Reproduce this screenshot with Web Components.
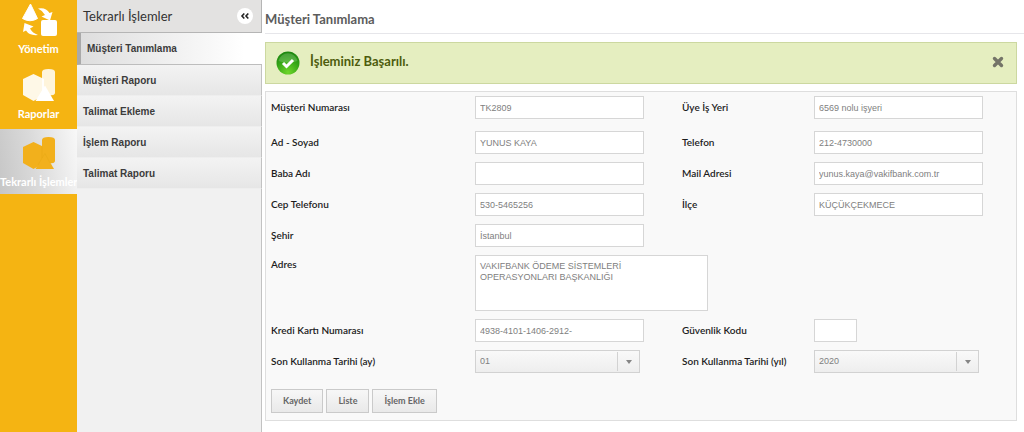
<!DOCTYPE html>
<html lang="tr">
<head>
<meta charset="utf-8">
<title>Müşteri Tanımlama</title>
<style>
  html, body { margin: 0; min-height: 100%; }
  body {
    background: #fff;
    color: #222;
    --ui: Lato, "Open Sans", sans-serif;
    --text: "Liberation Sans", Arial, sans-serif;
    font-family: var(--ui);
    font-size: 10px;
  }
</style>
</head>
<body>
<app-shell></app-shell>

<template id="nav-tile">
  <style>
    :host { display: block; }
    a {
      display: flex; flex-direction: column; box-sizing: border-box;
      height: 65px; padding-top: 7px; 
      color: #fff; text-decoration: none;
    }
    ::slotted(svg) { display: block; width: 36px; height: 36px; margin: 0 auto; overflow: visible; }
    span { font-size: 11px; line-height: 14px; font-weight: 700; text-align: center; white-space: nowrap; }
    :host([active]) a { gap: 3px; background: linear-gradient(80deg, #c6c6c6, #dadada 45%, #f8f8f8); }
  </style>
  <a href="#"><slot></slot><span></span></a>
</template>

<template id="menu-item">
  <style>
    :host { display: block; }
    a {
      display: block; box-sizing: border-box; height: 31px; padding-left: 6px;
      font: 700 10px/31px var(--text); color: #3c3c3c; text-decoration: none;
      background: linear-gradient(#f3f3f3, #e6e6e6); border-right: 1px solid #c2c2c2;
      border-bottom: 1px solid #eee;
    }
    :host([active]) a {
      height: 32px; border-right: 0; border-left: 4px solid #a9a9a9; border-bottom: 1px solid #bdbdbd;
      background: linear-gradient(90deg, #dedede, #fff 90%);
    }
  </style>
  <a href="#"><slot></slot></a>
</template>

<template id="side-menu">
  <style>
    :host { display: flex; flex-direction: column; background: #f1f1f1; }
    header {
      display: flex; align-items: center; justify-content: space-between; box-sizing: border-box;
      height: 33px; padding: 0 8px 0 6px; background: #e3e2e1;
      border-right: 1px solid #b5b5b5; border-bottom: 1px solid #b5b5b5;
    }
    h2 { margin: 0; font-size: 13px; line-height: 32px; font-weight: 400; color: #333; }
    button {
      width: 16px; height: 16px; padding: 0; border: 0; border-radius: 8px; background: #fff;
      display: grid; place-items: center;
    }
    .rest { flex: 1; border-right: 1px solid #c2c2c2; }
  </style>
  <header>
    <h2>Tekrarlı İşlemler</h2>
    <button type="button" aria-label="Menüyü daralt">
      <svg width="10" height="8" viewBox="0 0 10 8" fill="none" stroke="#222" stroke-width="1.6"><path d="M4.3 1.500 2 4l2.300 2.500M8.300 1.500 6 4l2.300 2.500"/></svg>
    </button>
  </header>
  <nav><slot></slot></nav>
  <div class="rest"></div>
</template>

<template id="alert-bar">
  <style>
    :host {
      display: flex; align-items: center; box-sizing: border-box; height: 42px; padding: 0 12px 0 10px;
      background: #e5eec0; border: 1px solid #ccd8a0;
    }
    strong { flex: 1; margin: 0 0 4px 10px; font-size: 13px; line-height: 16px; font-weight: 700; color: #4d5c0d; }
    button { border: 0; padding: 0; background: none; width: 12px; height: 12px; margin-bottom: 2px; }
    svg { display: block; }
  </style>
  <svg width="24" height="24" viewBox="0 0 24 24">
    <defs><radialGradient id="g" cx=".5" cy=".9" r=".9"><stop offset="0" stop-color="#6fd62a"/><stop offset=".6" stop-color="#33a416"/><stop offset="1" stop-color="#1c8410"/></radialGradient></defs>
    <circle cx="12" cy="12" r="11.500" fill="url(#g)"/>
    <path d="M2.500 10a9.700 9.700 0 0 1 19 0Q12 13 2.500 10Z" fill="#fff" opacity=".18"/>
    <path d="M7 12l3.500 3.500L17 9" fill="none" stroke="#fff" stroke-width="3"/>
  </svg>
  <strong><slot></slot></strong>
  <button type="button" aria-label="Kapat">
    <svg width="12" height="12" viewBox="0 0 12 12"><path d="M2.500 2.500l7 7M9.500 2.500l-7 7" stroke="#747468" stroke-width="3.400" stroke-linecap="round"/></svg>
  </button>
</template>

<template id="form-field">
  <style>
    :host { display: contents; }
    label { grid-column: var(--col, 1); font-size: 10px; line-height: 23px; font-weight: 600; color: #1c1c1c; white-space: nowrap; }
    input, textarea, select {
      display: block; box-sizing: border-box; width: 100%; height: 23px; margin: 0; padding: 0 4px;
      border: 1px solid #d6d6d6; border-radius: 0; background: #fff; color: #808080;
      font: 9px/11px var(--text); outline: 0;
    }
    textarea { height: 56px; padding: 5px 4px; resize: none; overflow: hidden; }
    .box { width: 169px; max-width: 100%; }
    .box.area { width: 233px; grid-column: span 2; }
    .box.tiny { width: 43px; }
    .box.list { width: 165px; display: grid; }
    .list > * { grid-area: 1 / 1; }
    select { appearance: none; background: linear-gradient(#f9f9f9, #eee); border-color: #d2d2d2; }
    i { justify-self: end; width: 21px; display: grid; place-items: center; margin: 2px 1px 2px 0; border-left: 1px solid #d2d2d2; pointer-events: none; }
    i::after { content: ""; border: 3px solid transparent; border-top: 4px solid #858585; border-bottom: 0; }
    .short { line-height: 18px; }
  </style>
  <label for="control"></label>
  <div class="box"></div>
</template>

<template id="action-button">
  <style>
    :host { display: block; }
    button {
      display: block; height: 24px; padding: 0 11px; border: 1px solid #cacaca; border-radius: 0;
      background: linear-gradient(#f7f7f7, #e9e9e9); color: #666;
      font: 700 9px/14px var(--ui); white-space: nowrap;
    }
  </style>
  <button type="button"><slot></slot></button>
</template>

<template id="customer-form">
  <style>
    :host { display: block; border: 1px solid #dedede; background: #f9f9f9; padding: 4px 5px 7px; }
    .grid {
      display: grid; grid-template-columns: 204fr 207fr 132fr 197fr; grid-template-rows: minmax(27px, auto);
      row-gap: 8px; align-items: start;
    }
    .right { --col: 3; }
    .actions { display: flex; gap: 3px; margin-top: 16px; }
  </style>
  <div class="grid">
    <form-field label="Müşteri Numarası" value="TK2809"></form-field>
    <form-field class="right" label="Üye İş Yeri" value="6569 nolu işyeri"></form-field>
    <form-field label="Ad - Soyad" value="YUNUS KAYA"></form-field>
    <form-field class="right" label="Telefon" value="212-4730000"></form-field>
    <form-field label="Baba Adı" value=""></form-field>
    <form-field class="right" label="Mail Adresi" value="yunus.kaya@vakifbank.com.tr"></form-field>
    <form-field label="Cep Telefonu" value="530-5465256"></form-field>
    <form-field class="right" label="İlçe" value="KÜÇÜKÇEKMECE"></form-field>
    <form-field label="Şehir" value="İstanbul"></form-field>
    <form-field label="Adres" kind="area" value="VAKIFBANK ÖDEME SİSTEMLERİ&#10;OPERASYONLARI BAŞKANLIĞI"></form-field>
    <form-field label="Kredi Kartı Numarası" value="4938-4101-1406-2912-"></form-field>
    <form-field class="right" label="Güvenlik Kodu" kind="tiny" value=""></form-field>
    <form-field label="Son Kullanma Tarihi (ay)" kind="list" value="01"></form-field>
    <form-field class="right" label="Son Kullanma Tarihi (yıl)" kind="list" value="2020"></form-field>
  </div>
  <div class="actions">
    <action-button>Kaydet</action-button>
    <action-button>Liste</action-button>
    <action-button>İşlem Ekle</action-button>
  </div>
</template>

<template id="app-shell">
  <style>
    :host { display: grid; grid-template-columns: 77px 185px minmax(0, 1fr); min-height: 100vh; }
    .rail { background: #f5b412; }
    .tiles { margin-top: -1px; }
    main { padding: 0 7px 11px 3px; }
    h1 { margin: 0 -7px 8px 0; font-size: 13px; line-height: 18px; padding: 10px 0 5px; font-weight: 700; color: #5c5c5c; border-bottom: 1px solid #e6e6ea; }
    alert-bar { margin-bottom: 7px; }
  </style>
  <nav class="rail"><div class="tiles">
    <nav-tile label="Yönetim">
      <svg viewBox="0 0 36 36" fill="#fff">
        <path d="M9.500 -2 16.500 12.500Q9 17 1.500 12.500Z" stroke="#fff" stroke-linejoin="round"/>
        <path d="M17 2.500Q25 1 28.500 7l3-1-2.500 8.500-8.500-4 3.500-1.500Q21.500 4.500 17 2.500Z"/>
        <path d="M17 29Q8.500 30 5 24.500l-3 1.500L3.500 17l9 3.500-3.500 2Q11.500 27 17 29Z"/>
        <rect x="20" y="14" width="16" height="16" rx="2"/>
      </svg>
    </nav-tile>
    <nav-tile label="Raporlar">
      <svg viewBox="0 0 36 36" fill="#fff">
        <path d="M12.500 3 23 8v16l-10.500 6L2 24V8Z" opacity=".9"/>
        <path d="M21 1q0-3 6.500-3T34 1v21q0 2.500-6.500 2.500T21 22Z" opacity=".85"/>
        <path d="M24 14.500 33 30H14.500Z"/>
      </svg>
    </nav-tile>
    <nav-tile label="Tekrarlı İşlemler" active>
      <svg viewBox="0 0 36 36" fill="#f2b01c">
        <path d="M12.500 6 23 11v16l-10.500 6L2 27V11Z"/>
        <path d="M21 4q0-3 6.500-3T34 4v21q0 2.500-6.500 2.500T21 25Z"/>
        <path d="M24 17.500 33 33H14.500Z"/>
        <path d="M21 10.500V22l-4 7M21 22l3-4.500 5 9.500" fill="none" stroke="#e8a915" stroke-width=".6"/>
      </svg>
    </nav-tile>
  </div></nav>
  <side-menu>
    <menu-item active>Müşteri Tanımlama</menu-item>
    <menu-item>Müşteri Raporu</menu-item>
    <menu-item>Talimat Ekleme</menu-item>
    <menu-item>İşlem Raporu</menu-item>
    <menu-item>Talimat Raporu</menu-item>
  </side-menu>
  <main>
    <h1>Müşteri Tanımlama</h1>
    <alert-bar>İşleminiz Başarılı.</alert-bar>
    <customer-form></customer-form>
  </main>
</template>

<script>
  class Templated extends HTMLElement {
    constructor() {
      super();
      this.attachShadow({ mode: "open" })
        .append(document.getElementById(this.localName).content.cloneNode(true));
    }
  }
  class NavTile extends Templated {
    connectedCallback() { this.shadowRoot.querySelector("span").textContent = this.getAttribute("label"); }
  }
  class FormField extends Templated {
    connectedCallback() {
      const kind = this.getAttribute("kind") || "text";
      const value = this.getAttribute("value");
      const label = this.shadowRoot.querySelector("label");
      const box = this.shadowRoot.querySelector(".box");
      label.textContent = this.getAttribute("label");
      box.replaceChildren();
      box.classList.add(kind);
      const control = document.createElement({ area: "textarea", list: "select" }[kind] || "input");
      control.id = "control";
      if (kind === "list") control.add(new Option(value));
      else control.value = value;
      if (kind === "area") label.classList.add("short");
      box.append(control);
      if (kind === "list") box.append(document.createElement("i"));
    }
  }
  customElements.define("nav-tile", NavTile);
  customElements.define("form-field", FormField);
  customElements.define("menu-item", class extends Templated {});
  customElements.define("side-menu", class extends Templated {});
  customElements.define("alert-bar", class extends Templated {});
  customElements.define("action-button", class extends Templated {});
  customElements.define("customer-form", class extends Templated {});
  customElements.define("app-shell", class extends Templated {});
</script>
</body>
</html>
